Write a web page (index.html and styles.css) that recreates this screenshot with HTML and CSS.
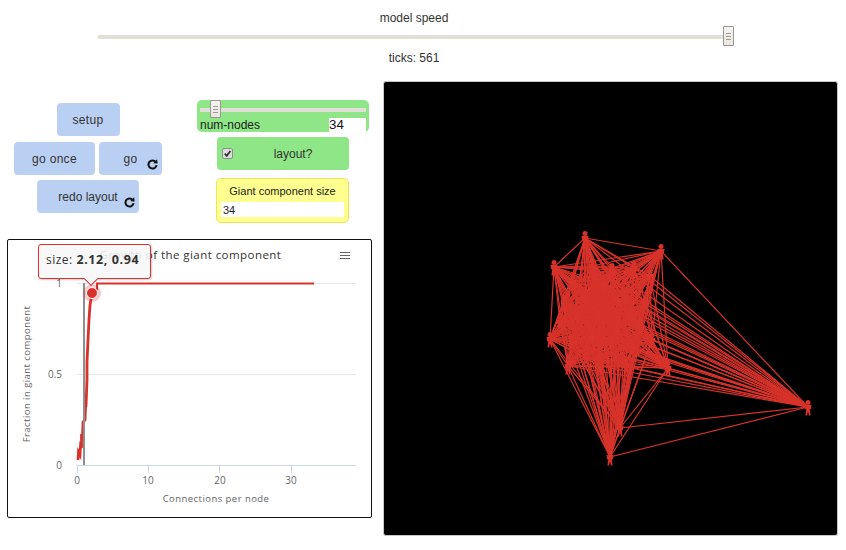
FILE: index.html
```html
<!DOCTYPE html>
<html lang="en">
<head>
<meta charset="utf-8">
<title>Giant component</title>
<link rel="stylesheet" href="styles.css">
</head>
<body>
<header class="speed">
  <div class="speed-label">model speed</div>
  <div class="speed-track"><span class="thumb speed-thumb"><i></i><i></i><i></i></span></div>
  <div class="ticks">ticks: 561</div>
</header>
<main class="main">
  <section class="left">
    <div class="controls">
      <div class="buttons">
        <button class="btn btn-setup">setup</button>
        <div class="btn-row">
          <button class="btn btn-once">go once</button>
          <button class="btn btn-go">go
            <svg class="forever" viewBox="0 0 12 12"><path d="M9.6 3.4A4.4 4.4 0 1 0 10.4 6.6"/><polygon points="6.9,4.5 11.6,4.9 11,0.4"/></svg>
          </button>
        </div>
        <button class="btn btn-redo">redo layout
          <svg class="forever" viewBox="0 0 12 12"><path d="M9.6 3.4A4.4 4.4 0 1 0 10.4 6.6"/><polygon points="6.9,4.5 11.6,4.9 11,0.4"/></svg>
        </button>
      </div>
      <div class="widgets">
        <div class="slider">
          <div class="slider-track"><span class="thumb slider-thumb"><i></i><i></i><i></i></span></div>
          <div class="slider-row"><span>num-nodes</span><span class="slider-value">34</span></div>
        </div>
        <div class="switch">
          <span class="check"><svg viewBox="0 0 10 10"><path d="M2 5.2 4.2 7.6 8.2 2.2"/></svg></span>
          <span class="switch-label">layout?</span>
        </div>
        <div class="monitor">
          <div class="monitor-label">Giant component size</div>
          <div class="monitor-value">34</div>
        </div>
      </div>
    </div>
    <figure class="chart">
      <svg class="chart-svg" viewBox="8 240 363 277">
        <text class="chart-title" x="190.5" y="259" text-anchor="middle">Growth of the giant component</text>
        <path class="menu" d="M340 252.5h10M340 255.5h10M340 258.5h10"/>
        <path class="grid" d="M77 283.5H356M77 374.5H356"/>
        <path class="axis" d="M77 465.5H356M77.5 465V473M148.5 465V473M219.5 465V473M291.5 465V473"/>
        <text class="tick" x="62" y="287" text-anchor="end">1</text>
        <text class="tick" x="62" y="378" text-anchor="end">0.5</text>
        <text class="tick" x="62" y="469" text-anchor="end">0</text>
        <text class="tick" x="77" y="484" text-anchor="middle">0</text>
        <text class="tick" x="148" y="484" text-anchor="middle">10</text>
        <text class="tick" x="220" y="484" text-anchor="middle">20</text>
        <text class="tick" x="291" y="484" text-anchor="middle">30</text>
        <text class="axis-title" x="216" y="502" text-anchor="middle">Connections per node</text>
        <text class="axis-title" transform="translate(30 374) rotate(-90)" text-anchor="middle">Fraction in giant component</text>
        <path class="series" d="M78 460 78.5 452 80 455 80.5 446 81.5 448 81.5 437 82.5 438 83 422 85 420 85.5 407 86 406 87 380 87 362 88 340 89 320 90 305 92 293"/>
        <path class="series-top" d="M97 290V283.5H314"/>
        <path class="mean" d="M84 283V465"/>
        <circle class="halo" cx="92" cy="293" r="9"/>
        <circle class="dot" cx="92" cy="293" r="5.5"/>
      </svg>
      <div class="tip">size: <b>2.12, 0.94</b></div>
    </figure>
  </section>
  <section class="view">
    <svg id="world" class="world" viewBox="384 82 453 453"></svg>
  </section>
</main>
<script src="graph.js"></script>
</body>
</html>
```
FILE: styles.css
```css
* { box-sizing: border-box; }
html, body { margin: 0; padding: 0; }
body {
  width: 846px;
  height: 550px;
  overflow: hidden;
  background: #fff;
  color: #333;
  font: 12px "Liberation Sans", Arial, sans-serif;
}

/* speed bar */
.speed {
  width: 832px;
  height: 82px;
  display: flex;
  flex-direction: column;
  align-items: center;
  padding-top: 11px;
}
.speed-label { line-height: 14px; margin-right: 4px; }
.speed-track {
  position: relative;
  width: 636px;
  height: 4px;
  margin-top: 10px;
  background: #e2dfd8;
}
.ticks { margin-top: 12px; margin-right: 4px; line-height: 14px; }

.thumb {
  position: absolute;
  display: flex;
  flex-direction: column;
  justify-content: center;
  gap: 2px;
  width: 11px;
  height: 20px;
  padding: 0 2px;
  background: linear-gradient(#f5f3f0, #e9e6e2);
  border: 1px solid #9b968e;
  border-radius: 1px;
}
.thumb i { display: block; height: 1px; background: #a09b93; }
.speed-thumb { right: 0; top: -9px; }

/* main layout */
.main { display: flex; padding-left: 7px; gap: 11px; }
.left { width: 365px; }
.controls { display: flex; gap: 35px; padding: 18px 0 0 7px; height: 157px; }

.buttons {
  width: 148px;
  padding-top: 3px;
  display: flex;
  flex-direction: column;
  align-items: center;
}
.btn {
  position: relative;
  height: 33px;
  padding: 0;
  border: 0;
  border-radius: 4px;
  background: #bad0f3;
  color: #333;
  font: inherit;
  text-align: center;
}
.btn-setup { width: 63px; letter-spacing: .3px; }
.btn-row { display: flex; gap: 4px; margin: 6px 0 5px; }
.btn-once { width: 81px; letter-spacing: .3px; }
.btn-go { width: 63px; letter-spacing: .3px; }
.btn-redo { width: 102px; }
.forever {
  position: absolute;
  right: 4px;
  bottom: 5px;
  width: 11px;
  height: 11px;
}
.forever path { fill: none; stroke: #111; stroke-width: 2.2; }
.forever polygon { fill: #111; }

.widgets {
  width: 172px;
  display: flex;
  flex-direction: column;
  align-items: center;
}
.slider {
  width: 172px;
  height: 32px;
  padding: 8px 3px 0;
  background: #8fe686;
  border-radius: 5px;
}
.slider-track { position: relative; height: 4px; background: #e2dfd8; }
.slider-thumb { left: 10px; top: -8px; height: 18px; }
.slider-row {
  display: flex;
  justify-content: space-between;
  align-items: flex-end;
  height: 20px;
  font-size: 12px;
  line-height: 14px;
  color: #222;
}
.slider-value { width: 37px; background: #fff; color: #111; font-size: 13.3px; }

.switch {
  width: 132px;
  height: 33px;
  margin-top: 5px;
  display: flex;
  align-items: center;
  padding-left: 5px;
  background: #8fe686;
  border-radius: 4px;
}
.check {
  width: 11px;
  height: 11px;
  background: #dcdcdc;
  border: 1px solid #8e8e8e;
  border-radius: 2px;
  display: flex;
}
.check path { fill: none; stroke: #333; stroke-width: 2; }
.switch-label { flex: 1; text-align: center; padding-left: 4px; }

.monitor {
  width: 133px;
  height: 45px;
  margin: 8px 1px 0 0;
  padding: 6px 4px 0;
  background: #ffff90;
  border: 1px solid #ebe55c;
  border-radius: 5px;
  text-align: center;
  font-size: 11px;
  color: #222;
}
.monitor-label { line-height: 13px; }
.monitor-value {
  height: 15px;
  margin-top: 4px;
  padding-left: 2px;
  background: #fff;
  text-align: left;
  font-size: 11px;
  line-height: 16px;
}

/* chart */
.chart {
  position: relative;
  width: 365px;
  height: 279px;
  margin: 0;
  border: 1px solid #111;
  border-radius: 2px;
}
.chart-svg { display: block; width: 363px; height: 277px; }
.chart-svg text { font-family: "Open Sans", "DejaVu Sans", sans-serif; fill: #666; }
.chart-svg .chart-title { font-size: 11.5px; fill: #333; letter-spacing: .45px; }
.chart-svg .tick { font-size: 10px; }
.chart-svg .axis-title { font-size: 9.5px; letter-spacing: .45px; }
.menu { stroke: #666; fill: none; }
.grid { stroke: #e6e6e6; fill: none; }
.axis { stroke: #ccd6eb; fill: none; }
.series { stroke: #d9312b; stroke-width: 2.8; fill: none; }
.series-top { stroke: #d9312b; stroke-width: 2; fill: none; }
.mean { stroke: #8e8e8e; stroke-width: 2; fill: none; }
.halo { fill: #d9312b; opacity: .25; }
.dot { fill: #d9312b; stroke: #fff; stroke-width: 1; }
.tip {
  position: absolute;
  left: 30px;
  top: 4px;
  width: 113px;
  height: 35px;
  padding-left: 7px;
  background: rgba(247, 247, 247, .88);
  border: 1px solid #d9312b;
  border-radius: 3px;
  box-shadow: 1px 1px 2px rgba(0, 0, 0, .2);
  font: 12px/29px "Open Sans", "DejaVu Sans", sans-serif;
  letter-spacing: .5px;
  color: #333;
}
.tip b { font-weight: 700; font-size: 12.5px; letter-spacing: .6px; }
.tip::after {
  content: "";
  position: absolute;
  left: 47px;
  bottom: -6px;
  width: 9px;
  height: 9px;
  background: #f7f7f7;
  border: solid #d9312b;
  border-width: 0 1px 1px 0;
  transform: rotate(45deg);
}

/* world view */
.view {
  width: 455px;
  height: 455px;
  margin-top: -1px;
  background: #000;
  border: 1px solid #c8c8c8;
  border-radius: 3px;
}
.world { display: block; width: 453px; height: 453px; }
.world line { stroke: #d7332b; stroke-width: 1.2; }
.world path, .world circle { fill: #d7332b; }
```
FILE: graph.js
```js
var nodes = [
  [585,238],[661,251],[554,267],[550,339],[568,366],[668,368],[808,407],[610,457],[620,428],
  [573,282],[592,266],[612,270],[634,268],[650,276],[564,302],[584,296],[604,290],[626,296],
  [646,304],[560,322],[578,318],[598,316],[618,318],[640,326],[572,342],[592,338],[612,342],
  [632,348],[652,340],[586,358],[600,366],[626,366],[596,280],[616,332]
];
var NS = "http://www.w3.org/2000/svg";
var world = document.getElementById("world");
function el(name, attrs) {
  var e = document.createElementNS(NS, name);
  for (var k in attrs) e.setAttribute(k, attrs[k]);
  world.appendChild(e);
}
for (var i = 0; i < nodes.length; i++) {
  for (var j = i + 1; j < nodes.length; j++) {
    el("line", { x1: nodes[i][0], y1: nodes[i][1], x2: nodes[j][0], y2: nodes[j][1] });
  }
}
nodes.forEach(function (n) {
  var x = n[0], y = n[1];
  el("circle", { cx: x, cy: y - 4.5, r: 2.5 });
  el("path", { d: "M" + (x - 3.5) + " " + (y - 2) + "h7l-.5 4-1.2 .5 .8 6h-1.6l-1-4-1 4h-1.6l.8-6-1.2-.5z" });
});
```
